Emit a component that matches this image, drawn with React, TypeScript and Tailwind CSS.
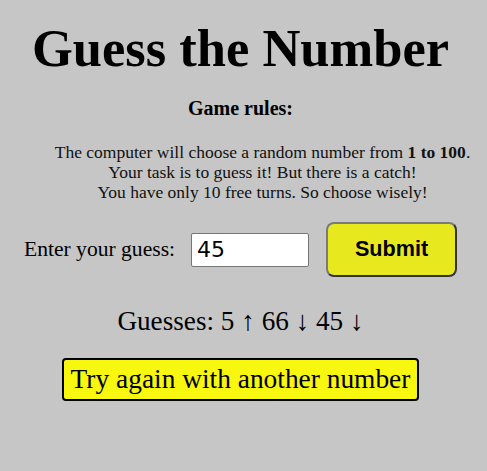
import React, { useState } from 'react';

export default function App() {
  const [guess, setGuess] = useState('45');
  const guesses = [
    { n: 5, dir: '↑' },
    { n: 66, dir: '↓' },
    { n: 45, dir: '↓' },
  ];

  return (
    <div className="min-h-[471px] w-full bg-[#c6c6c6] text-black font-['Liberation_Serif',serif]">
      <div className="w-[481px] flex flex-col items-center">
        <h1 className="mt-[19px] text-[52.5px] leading-[58px] font-bold">Guess the Number</h1>

        <h3 className="mt-[20px] text-[20px] leading-[22px] font-bold">Game rules:</h3>

        <p className="mt-[23px] self-stretch pl-[44px] text-center text-[17.5px] leading-[20px] text-[#111]">
          The computer will choose a random number from <b>1 to 100</b>.
          <br />
          Your task is to guess it! But there is a catch!
          <br />
          You have only 10 free turns. So choose wisely!
        </p>

        <div className="mt-[20px] flex items-center">
          <label className="text-[21.6px] leading-[25px]">Enter your guess:</label>
          <input
            type="text"
            value={guess}
            onChange={(e) => setGuess(e.target.value)}
            className="ml-[16px] w-[118px] h-[34px] px-[5px] bg-white border border-[#767676] rounded-[2px] text-[22px] font-['DejaVu_Sans',sans-serif] outline-none"
          />
          <button className="ml-[17px] w-[131px] h-[55px] bg-[#e8e81f] border-2 border-t-[#7a7a7a] border-l-[#7a7a7a] border-r-[#333] border-b-[#333] rounded-[8px] text-[21.6px] font-bold font-['Liberation_Sans',sans-serif]">
            Submit
          </button>
        </div>

        <p className="mt-[29px] text-[27.2px] leading-[31px]">
          Guesses:{' '}
          {guesses.map((g, i) => (
            <span key={i}>
              {g.n} {g.dir}{i < guesses.length - 1 ? ' ' : ''}
            </span>
          ))}
        </p>

        <button className="mt-[21px] h-[43px] px-[7px] bg-[#f7f70f] border-2 border-black rounded-[4px] text-[27.4px] leading-[35px] font-['Liberation_Serif',serif]">
          Try again with another number
        </button>
      </div>
    </div>
  );
}
